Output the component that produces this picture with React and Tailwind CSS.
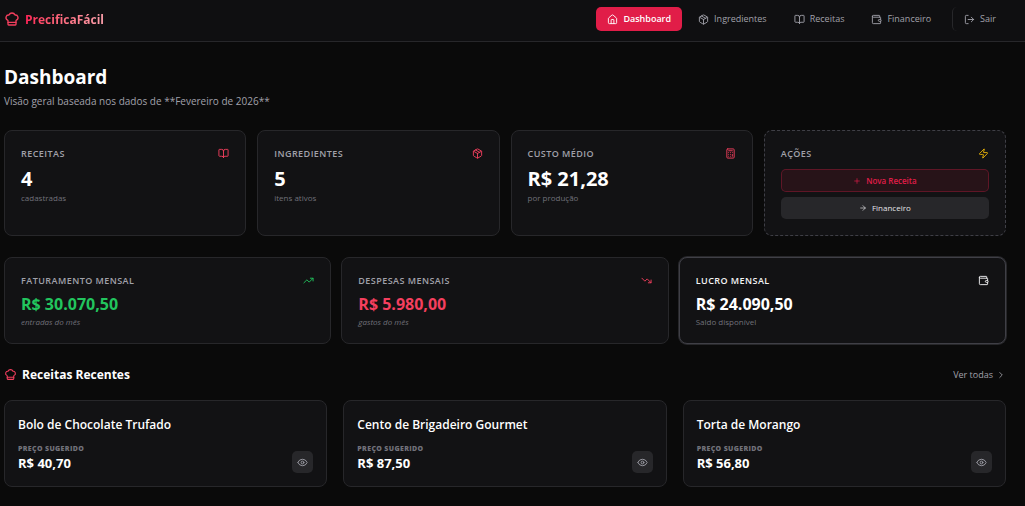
import React from 'react';
import {
  ArrowRight,
  BookOpen,
  Calculator,
  ChefHat,
  ChevronRight,
  Eye,
  House,
  LogOut,
  Package,
  Plus,
  TrendingDown,
  TrendingUp,
  Wallet,
  Zap,
} from 'lucide-react';

const navItems = [
  { label: 'Dashboard', icon: House, active: true },
  { label: 'Ingredientes', icon: Package },
  { label: 'Receitas', icon: BookOpen },
  { label: 'Financeiro', icon: Wallet },
];

const stats = [
  { label: 'Receitas', value: '4', hint: 'cadastradas', icon: BookOpen },
  { label: 'Ingredientes', value: '5', hint: 'itens ativos', icon: Package },
  { label: 'Custo Médio', value: 'R$ 21,28', hint: 'por produção', icon: Calculator },
];

const finances = [
  {
    label: 'Faturamento Mensal',
    value: 'R$ 30.070,50',
    hint: 'entradas do mês',
    icon: TrendingUp,
    card: 'border-[#27272a]',
    labelColor: 'text-[#a1a1aa]',
    valueColor: 'text-[#22c55e]',
    iconColor: 'text-[#22c55e]',
    hintStyle: 'italic',
  },
  {
    label: 'Despesas Mensais',
    value: 'R$ 5.980,00',
    hint: 'gastos do mês',
    icon: TrendingDown,
    card: 'border-[#27272a]',
    labelColor: 'text-[#a1a1aa]',
    valueColor: 'text-[#f43f5e]',
    iconColor: 'text-[#f43f5e]',
    hintStyle: 'italic',
  },
  {
    label: 'Lucro Mensal',
    value: 'R$ 24.090,50',
    hint: 'Saldo disponível',
    icon: Wallet,
    card: 'border-[#3f3f46] ring-1 ring-zinc-800',
    labelColor: 'text-zinc-100',
    valueColor: 'text-white',
    iconColor: 'text-zinc-100',
    hintStyle: '',
  },
];

const recipes = [
  { name: 'Bolo de Chocolate Trufado', price: 'R$ 40,70' },
  { name: 'Cento de Brigadeiro Gourmet', price: 'R$ 87,50' },
  { name: 'Torta de Morango', price: 'R$ 56,80' },
];

function CardHeader({ label, icon: Icon, labelColor = 'text-[#a1a1aa]', iconColor = 'text-[#f43f5e]' }) {
  return (
    <div className="flex h-[13px] items-center justify-between">
      <h3 className={`text-[9px] leading-[13px] font-semibold uppercase tracking-wider ${labelColor}`}>{label}</h3>
      <Icon size={11} className={iconColor} />
    </div>
  );
}

function Header() {
  return (
    <header className="border-b border-[#27272a] bg-[#0f0f11]">
      <div className="flex items-center justify-between pt-[7px] pr-[18px] pb-[10px] pl-1">
        <a href="#" className="flex items-center gap-[5px]">
          <ChefHat size={16} className="text-[#f43f5e]" />
          <span className="bg-linear-to-r from-rose-500 to-rose-300 bg-clip-text text-[12px] leading-[19px] font-bold text-transparent">
            PrecificaFácil
          </span>
        </a>
        <nav className="flex items-center gap-[5px]">
          {navItems.map(({ label, icon: Icon, active }) => (
            <a
              key={label}
              href="#"
              className={`flex h-6 items-center gap-[5px] rounded-[5px] px-[11px] text-[9px] ${
                active ? 'bg-[#e11d48] font-semibold text-white' : 'font-medium text-[#a1a1aa]'
              }`}
            >
              <Icon size={11} /> {label}
            </a>
          ))}
          <button className="ml-[5px] flex h-6 items-center gap-[5px] rounded-[5px] border-l border-[#27272a] px-[11px] text-[9px] font-medium text-[#a1a1aa]">
            <LogOut size={11} /> Sair
          </button>
        </nav>
      </div>
    </header>
  );
}

export default function App() {
  return (
    <div className="min-h-screen bg-[#0a0a0a] font-['Open_Sans','Noto_Sans',sans-serif] text-zinc-100">
      <Header />

      <main className="pt-[22px] pr-[19px] pb-[19px] pl-1">
        <h1 className="text-[19px] leading-[27px] font-bold text-white">Dashboard</h1>
        <p className="mt-[2px] text-[10px] leading-4 text-[#a1a1aa]">
          Visão geral baseada nos dados de **Fevereiro de 2026**
        </p>

        {/* Totals and quick actions */}
        <section className="mt-[21px] grid grid-cols-4 gap-[11px]">
          {stats.map((stat) => (
            <div key={stat.label} className="rounded-lg border border-[#27272a] bg-[#121214] p-4">
              <CardHeader label={stat.label} icon={stat.icon} />
              <p className="mt-[7px] text-[20px] leading-6 font-bold text-white">{stat.value}</p>
              <p className="mt-px text-[8px] leading-[11px] text-[#71717a]">{stat.hint}</p>
            </div>
          ))}
          <div className="rounded-lg border border-dashed border-[#3f3f46] bg-[#121214] p-4">
            <CardHeader label="Ações" icon={Zap} iconColor="text-[#eab308]" />
            <div className="mt-[9px] flex flex-col gap-[5px] text-[8px] font-medium">
              <button className="flex h-[23px] items-center justify-center gap-[5px] rounded-[5px] border border-[#e11d48]/30 bg-[#e11d48]/10 font-semibold text-[#e11d48]">
                <Plus size={8} /> Nova Receita
              </button>
              <button className="flex h-[22px] items-center justify-center gap-[5px] rounded-[5px] bg-[#27272a] text-zinc-200">
                <ArrowRight size={8} /> Financeiro
              </button>
            </div>
          </div>
        </section>

        {/* Monthly finances */}
        <section className="mt-[21px] grid grid-cols-3 gap-[10px]">
          {finances.map((item) => (
            <div key={item.label} className={`rounded-lg border bg-[#121214] p-4 ${item.card}`}>
              <CardHeader
                label={item.label}
                icon={item.icon}
                labelColor={item.labelColor}
                iconColor={item.iconColor}
              />
              <p className={`mt-[7px] text-[16px] leading-5 font-bold ${item.valueColor}`}>{item.value}</p>
              <p className={`mt-[2px] text-[8px] leading-[11px] text-[#71717a] ${item.hintStyle}`}>{item.hint}</p>
            </div>
          ))}
        </section>

        {/* Recent recipes */}
        <section className="mt-[21px]">
          <div className="flex items-center justify-between">
            <h2 className="flex items-center gap-[5px] text-[12px] leading-[19px] font-bold text-white">
              <ChefHat size={13} className="text-[#f43f5e]" /> Receitas Recentes
            </h2>
            <a href="#" className="flex items-center gap-[3px] text-[9px] text-[#a1a1aa]">
              Ver todas <ChevronRight size={10} />
            </a>
          </div>
          <div className="mt-4 grid grid-cols-3 gap-4">
            {recipes.map((recipe) => (
              <div key={recipe.name} className="rounded-lg border border-[#27272a] bg-[#121214] p-[13px]">
                <h4 className="mt-px text-[12px] leading-[19px] font-semibold text-white">{recipe.name}</h4>
                <div className="mt-[9px] flex items-end justify-between">
                  <div>
                    <p className="text-[7px] leading-[11px] font-extrabold uppercase tracking-wider text-[#71717a]">
                      Preço Sugerido
                    </p>
                    <p className="text-[13px] leading-[19px] font-bold text-white">{recipe.price}</p>
                  </div>
                  <button
                    aria-label={`Ver ${recipe.name}`}
                    className="flex h-[22px] w-[21px] items-center justify-center rounded-[5px] bg-[#27272a] text-[#a1a1aa]"
                  >
                    <Eye size={11} />
                  </button>
                </div>
              </div>
            ))}
          </div>
        </section>
      </main>
    </div>
  );
}
